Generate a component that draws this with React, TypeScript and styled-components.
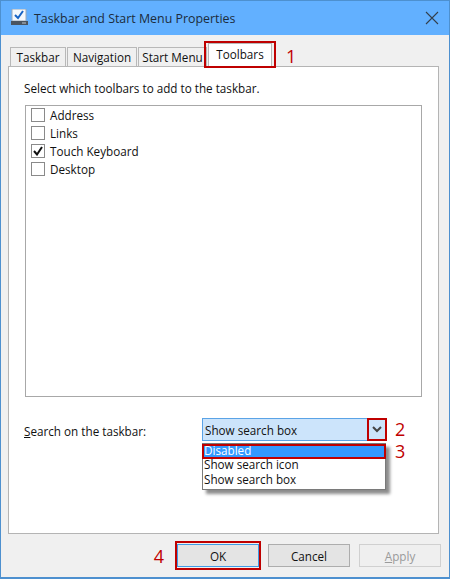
import React from 'react';
import styled, { createGlobalStyle } from 'styled-components';

const GlobalStyle = createGlobalStyle`
  html, body {
    margin: 0;
    padding: 0;
    background: #f0f0f0;
  }
  * {
    box-sizing: border-box;
  }
`;

const Window = styled.div`
  width: 450px;
  height: 579px;
  display: flex;
  flex-direction: column;
  background: #f0f0f0;
  border: 1px solid #4d90cf;
  border-bottom-width: 2px;
  font-family: 'Open Sans', 'Liberation Sans', sans-serif;
  font-size: 11.7px;
  color: #111;
`;

const TitleBar = styled.div`
  height: 34px;
  flex: none;
  display: flex;
  align-items: center;
  padding: 0 10px;
  background: #62b0ff;
`;

const TitleText = styled.span`
  margin-left: 5px;
  font-size: 12.4px;
  color: #1c2c3c;
`;

const CloseButton = styled.button`
  margin-left: auto;
  padding: 0;
  border: 0;
  background: none;
  display: flex;
  width: 14px;
  height: 14px;
`;

const Content = styled.div`
  flex: 1;
  display: flex;
  flex-direction: column;
  padding: 10px 10px 0 7px;
`;

const TabRow = styled.div`
  display: flex;
  align-items: flex-end;
  height: 22px;
  padding-left: 2px;
  position: relative;
  z-index: 1;
  margin-bottom: -1px;
`;

const Tab = styled.div<{ $active?: boolean; $width: number }>`
  position: relative;
  flex: none;
  width: ${p => p.$width}px;
  height: ${p => (p.$active ? 24 : 20)}px;
  display: flex;
  align-items: center;
  justify-content: center;
  padding-bottom: ${p => (p.$active ? 2 : 0)}px;
  margin-right: ${p => (p.$active ? 0 : 1)}px;
  background: ${p => (p.$active ? '#fff' : '#f0f0f0')};
  border: 1px solid #b8b8b8;
  border-bottom: ${p => (p.$active ? '1px solid #fff' : '1px solid #b8b8b8')};
`;

// the red annotation rectangles drawn over the screenshot
const RedBox = styled.span<{ $x: number; $top: number; $bottom: number }>`
  position: absolute;
  left: ${p => -p.$x}px;
  right: ${p => -p.$x}px;
  top: ${p => -p.$top}px;
  bottom: ${p => -p.$bottom}px;
  border: 2px solid #bf0000;
  pointer-events: none;
`;

const Marker = styled.span`
  font-size: 18px;
  line-height: 20px;
  color: #c00000;
`;

const TabMarker = styled(Marker)`
  margin-left: 14px;
  align-self: center;
`;

const Panel = styled.div`
  flex: 1;
  display: flex;
  flex-direction: column;
  background: #fff;
  border: 1px solid #b4b4b4;
  padding: 12px 16px 0 15px;
`;

const Hint = styled.div`
  height: 18px;
  line-height: 18px;
`;

const ListBox = styled.div`
  margin: 8px 0 0 1px;
  height: 292px;
  border: 1px solid #a8a8a8;
  padding: 0 5px;
`;

const ListRow = styled.label`
  height: 18px;
  display: flex;
  align-items: center;
  gap: 5px;
`;

const CheckBox = styled.span`
  width: 14px;
  height: 14px;
  flex: none;
  display: flex;
  align-items: center;
  justify-content: center;
  background: #fff;
  border: 1px solid #8a8a8a;
`;

const SearchRow = styled.div`
  margin-top: 21px;
  display: flex;
  align-items: flex-start;
`;

const SearchLabel = styled.div`
  width: 178px;
  height: 20px;
  margin-top: 3px;
  line-height: 20px;
  u {
    text-decoration: underline;
  }
`;

const Combo = styled.div`
  position: relative;
  flex: none;
  width: 185px;
`;

const ComboField = styled.div`
  height: 23px;
  display: flex;
  align-items: center;
  padding-left: 2px;
  background: #cce4fb;
  border: 1px solid #5aa3e6;
`;

const ComboArrow = styled.div`
  position: relative;
  margin-left: auto;
  width: 20px;
  height: 23px;
  margin-right: -1px;
  display: flex;
  align-items: center;
  justify-content: center;
`;

const DropList = styled.div`
  position: absolute;
  left: 0;
  top: 25px;
  width: 184px;
  height: 47px;
  background: #fff;
  border: 1px solid #7a7a7a;
  box-shadow: 4px 4px 3px rgba(0, 0, 0, 0.45);
`;

const DropItem = styled.div<{ $selected?: boolean }>`
  position: relative;
  height: 15px;
  line-height: ${p => (p.$selected ? 13 : 11)}px;
  padding-left: 1px;
  white-space: nowrap;
  background: ${p => (p.$selected ? '#3399ff' : 'transparent')};
  color: ${p => (p.$selected ? '#fff' : '#111')};
`;

const ComboNotes = styled.div`
  margin: 1px 0 0 8px;
  display: flex;
  flex-direction: column;
  gap: 2px;
`;

const Footer = styled.div`
  height: 43px;
  flex: none;
  display: flex;
  align-items: center;
  justify-content: flex-end;
  gap: 9px;
  margin-right: -2px;
`;

const FooterMarker = styled(Marker)`
  margin-right: 4px;
`;

const DialogButton = styled.button<{ $primary?: boolean }>`
  position: relative;
  width: 82px;
  height: 23px;
  padding: 0;
  font-family: inherit;
  font-size: 11.7px;
  color: ${p => (p.disabled ? '#9a9a9a' : '#111')};
  background: ${p => (p.disabled ? '#efefef' : '#e4e4e4')};
  border: 1px solid ${p => (p.disabled ? '#d0d0d0' : p.$primary ? '#3f9be6' : '#adadad')};
  u {
    text-decoration: underline;
  }
`;

const toolbars = [
  { name: 'Address', checked: false },
  { name: 'Links', checked: false },
  { name: 'Touch Keyboard', checked: true },
  { name: 'Desktop', checked: false },
];

const tabs = [
  { name: 'Taskbar', width: 56 },
  { name: 'Navigation', width: 70 },
  { name: 'Start Menu', width: 69 },
];

const App: React.FC = () => {
  return (
    <Window>
      <GlobalStyle />
      <TitleBar>
        <svg width="18" height="18" viewBox="0 0 18 18">
          <rect x="1" y="0" width="14" height="12" fill="#f4f8fc" stroke="#9aa8b8" />
          <path d="M4 6l3 3 5-7" fill="none" stroke="#1763c4" strokeWidth="2" />
          <rect x="0" y="12" width="17" height="4" fill="#4a5460" />
          <rect x="11" y="13.5" width="4" height="1" fill="#b9c3cd" />
        </svg>
        <TitleText>Taskbar and Start Menu Properties</TitleText>
        <CloseButton aria-label="Close">
          <svg width="14" height="14" viewBox="0 0 14 14">
            <path d="M1 1l12 12M13 1L1 13" stroke="#333f4c" strokeWidth="1.1" />
          </svg>
        </CloseButton>
      </TitleBar>
      <Content>
        <TabRow>
          {tabs.map(tab => (
            <Tab key={tab.name} $width={tab.width}>{tab.name}</Tab>
          ))}
          <Tab $active $width={64}>
            Toolbars
            <RedBox $x={5} $top={3} $bottom={2} />
          </Tab>
          <TabMarker>1</TabMarker>
        </TabRow>
        <Panel>
          <Hint>Select which toolbars to add to the taskbar.</Hint>
          <ListBox>
            {toolbars.map(item => (
              <ListRow key={item.name}>
                <CheckBox>
                  {item.checked && (
                    <svg width="10" height="10" viewBox="0 0 10 10">
                      <path d="M1 5l3 3.5L9 1" fill="none" stroke="#111" strokeWidth="2" />
                    </svg>
                  )}
                </CheckBox>
                {item.name}
              </ListRow>
            ))}
          </ListBox>
          <SearchRow>
            <SearchLabel><u>S</u>earch on the taskbar:</SearchLabel>
            <Combo>
              <ComboField>
                Show search box
                <ComboArrow>
                  <svg width="10" height="7" viewBox="0 0 10 7">
                    <path d="M1 1l4 4 4-4" fill="none" stroke="#444" strokeWidth="2" />
                  </svg>
                  <RedBox $x={0} $top={0} $bottom={0} />
                </ComboArrow>
              </ComboField>
              <DropList>
                <DropItem $selected>
                  Disabled
                  <RedBox $x={1} $top={0} $bottom={0} />
                </DropItem>
                <DropItem>Show search icon</DropItem>
                <DropItem>Show search box</DropItem>
              </DropList>
            </Combo>
            <ComboNotes>
              <Marker>2</Marker>
              <Marker>3</Marker>
            </ComboNotes>
          </SearchRow>
        </Panel>
        <Footer>
          <FooterMarker>4</FooterMarker>
          <DialogButton $primary>
            OK
            <RedBox $x={3} $top={4} $bottom={4} />
          </DialogButton>
          <DialogButton>Cancel</DialogButton>
          <DialogButton disabled><u>A</u>pply</DialogButton>
        </Footer>
      </Content>
    </Window>
  );
};

export default App;
